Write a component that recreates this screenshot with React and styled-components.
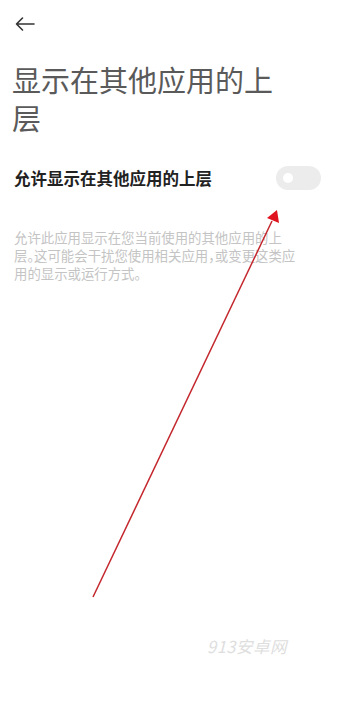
import React, { useState } from 'react'
import styled, { createGlobalStyle } from 'styled-components'

const Global = createGlobalStyle`
  html, body { margin: 0; padding: 0; background: #fff; }
  body { font-family: "Noto Sans CJK SC", "Noto Sans", sans-serif; }
`

const Page = styled.div`
  position: relative;
  width: 339px;
  height: 720px;
  overflow: hidden;
  background: #fff;
`

const TopBar = styled.div`
  height: 48px;
  display: flex;
  align-items: center;
  padding-left: 13px;
`

const BackButton = styled.button`
  border: 0;
  background: none;
  padding: 0;
  width: 24px;
  height: 24px;
  display: flex;
  align-items: center;
  justify-content: center;
  color: #333;
`

const Title = styled.h1`
  margin: 12px 0 0;
  padding: 0 50px 0 12px;
  font-size: 29px;
  font-weight: 400;
  line-height: 38px;
  color: #5a5a5a;
`

const Row = styled.div`
  display: flex;
  align-items: center;
  justify-content: space-between;
  padding: 0 18px 0 14px;
  margin-top: 27px;
  height: 30px;
`

const RowLabel = styled.span`
  font-size: 16.5px;
  font-weight: 700;
  color: #222;
`

const Toggle = styled.button`
  position: relative;
  width: 45px;
  height: 24px;
  border: 0;
  border-radius: 12px;
  padding: 0;
  background: ${p => (p.$on ? '#1f7aff' : '#ececec')};
  &::after {
    content: '';
    position: absolute;
    top: 7px;
    left: ${p => (p.$on ? '29px' : '7px')};
    width: 10px;
    height: 10px;
    border-radius: 50%;
    background: #fff;
  }
`

const Description = styled.p`
  margin: 35px 0 0;
  padding: 0 20px 0 14px;
  font-size: 13.4px;
  line-height: 18px;
  color: #c4c4c4;
  font-feature-settings: "halt";
`

const Line = styled.span`
  display: block;
  white-space: nowrap;
`

const Watermark = styled.div`
  position: absolute;
  left: 207px;
  top: 634px;
  font-size: 16.5px;
  font-style: italic;
  color: #dedede;
  letter-spacing: 0.5px;
`

const Annotation = styled.svg`
  position: absolute;
  left: 0;
  top: 0;
  pointer-events: none;
`

const lines = [
  '允许此应用显示在您当前使用的其他应用的上',
  '层。这可能会干扰您使用相关应用，或变更这类应',
  '用的显示或运行方式。',
]

export default function App() {
  const [on, setOn] = useState(false)
  return (
    <Page>
      <Global />
      <TopBar>
        <BackButton aria-label="back">
          <svg width="22" height="16" viewBox="0 0 22 16" fill="none" stroke="currentColor" strokeWidth="1.6" strokeLinecap="round" strokeLinejoin="round">
            <path d="M20 8H2.5M8.5 2L2.5 8l6 6" />
          </svg>
        </BackButton>
      </TopBar>
      <Title>显示在其他应用的上层</Title>
      <Row>
        <RowLabel>允许显示在其他应用的上层</RowLabel>
        <Toggle $on={on} onClick={() => setOn(!on)} />
      </Row>
      <Description>
        {lines.map(l => (
          <Line key={l}>{l}</Line>
        ))}
      </Description>
      <Watermark>913安卓网</Watermark>
      <Annotation width="339" height="720" viewBox="0 0 339 720">
        <line x1="93" y1="597" x2="272" y2="221" stroke="#c3262c" strokeWidth="1.5" />
        <polygon points="277,210 279,223 267,218" fill="#e0141e" />
      </Annotation>
    </Page>
  )
}
